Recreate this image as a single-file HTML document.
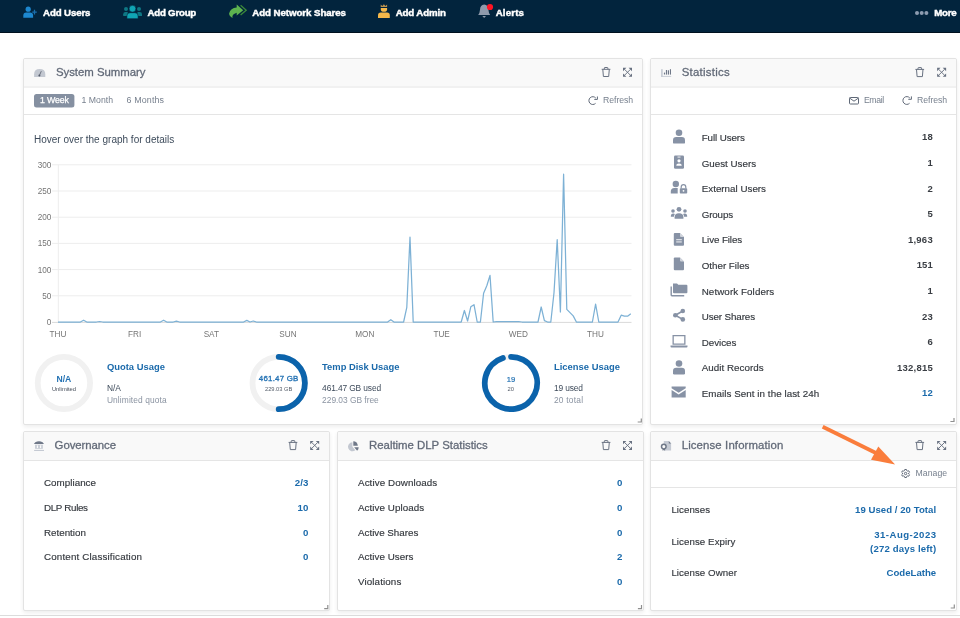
<!DOCTYPE html>
<html><head><meta charset="utf-8">
<style>
*{box-sizing:border-box;margin:0;padding:0}
html,body{width:960px;height:618px;overflow:hidden;background:#fff;font-family:"Liberation Sans",sans-serif;position:relative}
#top{position:absolute;left:0;top:0;width:960px;height:33px;background:#02243d;border-bottom:1px solid #00111f}
.panel{position:absolute;background:#fff;border:1px solid #e3e3e3;border-radius:2px;box-shadow:0 2px 4px rgba(0,0,0,0.07)}
.ph{position:absolute;left:0;top:0;right:0;height:29px;background:#f9f9f9;border-bottom:1px solid #e5e5e5;border-radius:2px 2px 0 0}
.tb{position:absolute;left:0;right:0;top:29px;height:27px;border-bottom:1px solid #e5e5e5}
svg text{font-family:"Liberation Sans",sans-serif}
#ov{position:absolute;left:0;top:0;will-change:transform}
</style></head><body>
<div id="top"></div>
<div class="panel" style="left:23px;top:58px;width:620px;height:367px"><div class="ph" style="border-bottom:2px solid #f1f1f1"></div><div class="tb"></div></div>
<div class="panel" style="left:650px;top:58px;width:307px;height:367px"><div class="ph" style="border-bottom:2px solid #f1f1f1"></div><div class="tb"></div></div>
<div class="panel" style="left:23px;top:431px;width:307px;height:180px"><div class="ph"></div></div>
<div class="panel" style="left:337px;top:431px;width:307px;height:180px"><div class="ph"></div></div>
<div class="panel" style="left:650px;top:431px;width:307px;height:180px"><div class="ph"></div><div class="tb"></div></div>
<div style="position:absolute;left:0;top:615px;width:960px;height:1px;background:#dcdcdc"></div>
<svg id="ov" width="960" height="618" viewBox="0 0 960 618">
<g fill="#1d88d0"><circle cx="28.2" cy="9.2" r="2.6"/><path d="M23.3,17.7 v-2.2 q0,-3 3,-3 h3.8 q3,0 3,3 v2.2z"/></g>
<path d="M34.5,9.8 v4.6 M32.2,12.1 h4.6" stroke="#1a6fae" stroke-width="1.3"/>
<g fill="#0e7784"><circle cx="126" cy="9.1" r="2"/><path d="M123.2,15.9 v-1.6 q0,-2.3 2.3,-2.3 h2.2 v3.9z"/><circle cx="139" cy="9.1" r="2"/><path d="M142,15.9 v-1.6 q0,-2.3 -2.3,-2.3 h-2.2 v3.9z"/></g>
<g fill="#10a5b4" stroke="#02243d" stroke-width="0.6"><circle cx="132.5" cy="8.7" r="3.4"/><path d="M126.9,18.7 v-2.8 q0,-3.2 3.2,-3.2 h4.8 q3.2,0 3.2,3.2 v2.8z"/></g>
<path d="M240.6,5.3 L246.2,10.2 L240.6,15" fill="none" stroke="#3a873a" stroke-width="1.3"/>
<path d="M243.2,10.2 L236.7,4.5 V7.5 Q230.4,8 229.1,13.6 Q229.3,16.6 232.5,18 Q231.6,14.2 236.7,12.7 V15.5 Z" fill="#5db34f"/>
<path d="M380.7,7 V4.6 L382.3,5.9 L383.9,4.2 L385.5,5.9 L387.1,4.6 V7 Z" fill="#b8904e"/>
<g fill="#f5b84a"><path d="M380.8,8 h6.3 v1.5 q0,2.3 -3.15,2.3 q-3.15,0 -3.15,-2.3z"/><path d="M378,18 v-2.6 q0,-2.8 2.8,-2.8 h6.2 q2.8,0 2.8,2.8 v2.6z"/></g>
<g fill="#8f9aab"><path d="M484.2,4.6 q-4,0.4 -4.2,5.2 q-0.2,3 -1.8,5.2 h12 q-1.6,-2.2 -1.8,-5.2 q-0.2,-4.8 -4.2,-5.2z"/><path d="M482.3,16 h3.7 l-1.85,1.9z"/></g>
<circle cx="490" cy="7" r="3.1" fill="#ff1424"/>
<g fill="#8d9cb0"><circle cx="917" cy="13" r="2"/><circle cx="921.7" cy="13" r="2"/><circle cx="926.4" cy="13" r="2"/></g>
<g fill="none" stroke="#687181" stroke-width="1"><path d="M604.3000000000001,69.3 v-1.3 q0,-0.5 0.5,-0.5 h2.6 q0.5,0 0.5,0.5 v1.3"/><path d="M601.7,69.3 h8.7"/><path d="M602.8000000000001,69.3 l0.6,7.2 h5.3 l0.6,-7.2"/></g>
<path d="M624.6,69.39999999999999 L630.4,75.2 M630.4,69.39999999999999 L624.6,75.2" stroke="#687181" stroke-width="0.95" fill="none"/><g fill="#687181"><path d="M623,67.8 h3.4 L623,71.2z"/><path d="M632,67.8 h-3.4 L632,71.2z"/><path d="M632,76.8 h-3.4 L632,73.39999999999999z"/><path d="M623,76.8 h3.4 L623,73.39999999999999z"/></g>
<g fill="none" stroke="#687181" stroke-width="1"><path d="M918.0,69.4 v-1.3 q0,-0.5 0.5,-0.5 h2.6 q0.5,0 0.5,0.5 v1.3"/><path d="M915.4,69.4 h8.7"/><path d="M916.5,69.4 l0.6,7.2 h5.3 l0.6,-7.2"/></g>
<path d="M938.7,69.39999999999999 L944.5,75.2 M944.5,69.39999999999999 L938.7,75.2" stroke="#687181" stroke-width="0.95" fill="none"/><g fill="#687181"><path d="M937.1,67.8 h3.4 L937.1,71.2z"/><path d="M946.1,67.8 h-3.4 L946.1,71.2z"/><path d="M946.1,76.8 h-3.4 L946.1,73.39999999999999z"/><path d="M937.1,76.8 h3.4 L937.1,73.39999999999999z"/></g>
<g fill="none" stroke="#687181" stroke-width="1"><path d="M291.20000000000005,442.4 v-1.3 q0,-0.5 0.5,-0.5 h2.6 q0.5,0 0.5,0.5 v1.3"/><path d="M288.6,442.4 h8.7"/><path d="M289.70000000000005,442.4 l0.6,7.2 h5.3 l0.6,-7.2"/></g>
<path d="M311.8,442.5 L317.59999999999997,448.29999999999995 M317.59999999999997,442.5 L311.8,448.29999999999995" stroke="#687181" stroke-width="0.95" fill="none"/><g fill="#687181"><path d="M310.2,440.9 h3.4 L310.2,444.29999999999995z"/><path d="M319.2,440.9 h-3.4 L319.2,444.29999999999995z"/><path d="M319.2,449.9 h-3.4 L319.2,446.5z"/><path d="M310.2,449.9 h3.4 L310.2,446.5z"/></g>
<g fill="none" stroke="#687181" stroke-width="1"><path d="M604.3000000000001,442.4 v-1.3 q0,-0.5 0.5,-0.5 h2.6 q0.5,0 0.5,0.5 v1.3"/><path d="M601.7,442.4 h8.7"/><path d="M602.8000000000001,442.4 l0.6,7.2 h5.3 l0.6,-7.2"/></g>
<path d="M624.6,442.5 L630.4,448.29999999999995 M630.4,442.5 L624.6,448.29999999999995" stroke="#687181" stroke-width="0.95" fill="none"/><g fill="#687181"><path d="M623,440.9 h3.4 L623,444.29999999999995z"/><path d="M632,440.9 h-3.4 L632,444.29999999999995z"/><path d="M632,449.9 h-3.4 L632,446.5z"/><path d="M623,449.9 h3.4 L623,446.5z"/></g>
<g fill="none" stroke="#687181" stroke-width="1"><path d="M918.0,442.4 v-1.3 q0,-0.5 0.5,-0.5 h2.6 q0.5,0 0.5,0.5 v1.3"/><path d="M915.4,442.4 h8.7"/><path d="M916.5,442.4 l0.6,7.2 h5.3 l0.6,-7.2"/></g>
<path d="M938.7,442.5 L944.5,448.29999999999995 M944.5,442.5 L938.7,448.29999999999995" stroke="#687181" stroke-width="0.95" fill="none"/><g fill="#687181"><path d="M937.1,440.9 h3.4 L937.1,444.29999999999995z"/><path d="M946.1,440.9 h-3.4 L946.1,444.29999999999995z"/><path d="M946.1,449.9 h-3.4 L946.1,446.5z"/><path d="M937.1,449.9 h3.4 L937.1,446.5z"/></g>
<path d="M34.1,77.1 V74.2 Q34.1,68.9 39.7,68.9 Q45.3,68.9 45.3,74.2 V77.1z" fill="#c3c8d1"/><path d="M39.5,75.2 L41.3,71.2" stroke="#555d6b" stroke-width="0.8"/><circle cx="39.4" cy="75.5" r="1" fill="#555d6b"/>
<g fill="#c5cad3"><rect x="661.1" y="69.2" width="1.6" height="7.6"/><rect x="661.1" y="75.9" width="10.1" height="0.9"/></g><g fill="#6f7888"><rect x="663.9" y="72.4" width="1.2" height="2.2" rx="0.5"/><rect x="665.9" y="70" width="1.2" height="4.6"/><rect x="667.9" y="70.3" width="1.1" height="4.3"/><rect x="669.9" y="69.2" width="1.1" height="5.4"/></g>
<path d="M33.9,444 L35.3,442.3 Q39,440.4 42.6,442.3 L44,444z" fill="#6f7888"/><rect x="35.1" y="444.7" width="7.7" height="4.1" fill="#c5cad3"/><rect x="36.8" y="445.3" width="1.3" height="2.8" fill="#fafafa"/><rect x="39.9" y="445.3" width="1.3" height="2.8" fill="#fafafa"/><rect x="34.1" y="449.9" width="9.9" height="1.1" fill="#c5cad3"/>
<path d="M352.4,446.8 V442.3 A4.5,4.5 0 1 0 355.3,450.3 Z" fill="#c3c8d1"/><path d="M353.3,445.8 V441.3 A4.5,4.5 0 0 1 357.8,445.8 Z" fill="#6f7888"/><path d="M354.2,447.3 H358.7 A4.5,4.5 0 0 1 357.1,450.7 Z" fill="#6f7888"/>
<path d="M663.8,441.1 h5 l2.3,2.4 v7.1 h-7.3z" fill="#c5cad3"/><path d="M668.8,441.1 v2.4 h2.3z" fill="#6f7888"/><path d="M662.6,448.4 h2.5 v2.4 l-1.25,-0.8 l-1.25,0.8z" fill="#6f7888"/><circle cx="663.8" cy="446.6" r="2.3" fill="#fafafa" stroke="#6f7888" stroke-width="1.5"/>
<rect x="34" y="94" width="40.4" height="13.5" rx="2.5" fill="#8590a1"/>
<g fill="none" stroke="#5f6877" stroke-width="1"><path d="M595.79,98.09 A3.9,3.9 0 1 0 595.56,103.36"/><path d="M597.40,96.50 V99.40 H594.30"/></g>
<g stroke="#ededed" stroke-width="1"><line x1="52" y1="295.8" x2="631.5" y2="295.8"/><line x1="52" y1="269.6" x2="631.5" y2="269.6"/><line x1="52" y1="243.4" x2="631.5" y2="243.4"/><line x1="52" y1="217.2" x2="631.5" y2="217.2"/><line x1="52" y1="191.0" x2="631.5" y2="191.0"/><line x1="52" y1="164.8" x2="631.5" y2="164.8"/><line x1="58.3" y1="164.8" x2="58.3" y2="322"/></g><line x1="52" y1="322.4" x2="631.5" y2="322.4" stroke="#d9d9d9" stroke-width="1"/>
<polyline fill="none" stroke="#7db1d5" stroke-width="1.25" stroke-linejoin="round" points="58.0,322.0 61.2,322.0 64.4,322.0 67.6,322.0 70.8,322.0 74.0,322.0 77.2,322.0 80.4,322.0 83.6,320.2 86.8,322.0 90.0,322.0 93.2,322.0 96.4,322.0 99.6,321.5 102.8,322.0 106.0,322.0 109.2,322.0 112.4,322.0 115.6,322.0 118.8,322.0 122.0,322.0 125.2,322.0 128.4,322.0 131.6,322.0 134.8,322.0 138.0,322.0 141.2,322.0 144.4,322.0 147.6,322.0 150.8,322.0 154.0,322.0 157.2,322.0 160.4,322.0 163.6,320.2 166.8,322.0 170.0,322.0 173.2,322.0 176.4,321.2 179.6,322.0 182.8,322.0 186.0,322.0 189.2,322.0 192.4,322.0 195.6,322.0 198.8,322.0 202.0,322.0 205.2,322.0 208.4,322.0 211.6,322.0 214.8,322.0 218.0,322.0 221.2,322.0 224.4,322.0 227.6,322.0 230.8,322.0 234.0,322.0 237.2,322.0 240.4,322.0 243.6,322.0 246.8,320.4 250.0,322.0 253.2,321.0 256.4,322.0 259.6,322.0 262.8,322.0 266.0,322.0 269.2,322.0 272.4,322.0 275.6,322.0 278.8,322.0 282.0,322.0 285.2,322.0 288.4,322.0 291.6,322.0 294.8,322.0 298.0,322.0 301.2,322.0 304.4,322.0 307.6,322.0 310.8,322.0 314.0,322.0 317.2,322.0 320.4,322.0 323.6,322.0 326.8,322.0 330.0,322.0 333.2,322.0 336.4,322.0 339.6,322.0 342.8,322.0 346.0,322.0 349.2,322.0 352.4,322.0 355.6,322.0 358.8,322.0 362.0,322.0 365.2,322.0 368.4,322.0 371.6,322.0 374.8,322.0 378.0,322.0 381.2,322.0 384.4,322.0 387.6,322.0 390.8,319.7 394.0,322.0 397.2,322.0 400.4,322.0 403.6,322.0 406.8,307.3 410.0,237.1 413.2,322.0 416.4,322.0 419.6,322.0 422.8,322.0 426.0,322.0 429.2,322.0 432.4,322.0 435.6,322.0 438.8,322.0 442.0,322.0 445.2,322.0 448.4,322.0 451.6,322.0 454.8,322.0 458.0,322.0 461.2,322.0 464.4,310.5 467.6,321.0 470.8,306.8 474.0,304.7 477.2,322.0 480.4,322.0 483.6,293.2 486.8,285.8 490.0,275.4 493.2,322.0 496.4,321.7 499.6,321.7 502.8,321.7 506.0,321.7 509.2,321.7 512.4,321.7 515.6,321.7 518.8,321.7 522.0,322.0 525.2,322.0 528.4,322.0 531.6,322.0 534.8,322.0 538.0,322.0 541.2,307.0 544.4,320.7 547.6,322.0 550.8,322.0 554.0,292.7 557.2,239.7 560.4,312.0 563.6,174.2 566.8,309.4 570.0,312.6 573.2,315.9 576.4,322.0 579.6,322.0 582.8,322.0 586.0,322.0 589.2,322.0 592.4,322.0 595.6,304.2 598.8,322.0 602.0,322.0 605.2,322.0 608.4,322.0 611.6,322.0 614.8,322.0 618.0,322.0 621.2,315.2 624.4,316.2 627.6,316.2 630.8,313.7"/>
<circle cx="63.9" cy="383" r="26.2" fill="none" stroke="#f1f1f1" stroke-width="5.8"/>
<circle cx="278.7" cy="383" r="26.2" fill="none" stroke="#f1f1f1" stroke-width="5.8"/>
<path d="M278.70,356.80 A26.2,26.2 0 0 1 278.70,409.20" fill="none" stroke="#0b63ab" stroke-width="5.8" stroke-linecap="round"/>
<circle cx="511" cy="383" r="26.2" fill="none" stroke="#f1f1f1" stroke-width="5.8"/>
<path d="M511.00,356.80 A26.2,26.2 0 1 1 502.90,358.08" fill="none" stroke="#0b63ab" stroke-width="5.8" stroke-linecap="round"/>
<path d="M641.3,418.4 V422 H637.6999999999999" fill="none" stroke="#8f8f8f" stroke-width="1.2"/>
<g fill="none" stroke="#5f6877" stroke-width="1"><rect x="849.5" y="97.5" width="9" height="6.5" rx="0.8"/><path d="M849.8,98.2 L854,101.2 L858.2,98.2"/></g>
<g fill="none" stroke="#5f6877" stroke-width="1"><path d="M909.79,97.99 A3.9,3.9 0 1 0 909.56,103.26"/><path d="M911.40,96.40 V99.30 H908.30"/></g>
<g fill="#8792a5"><circle cx="679" cy="132.70000000000002" r="3.3"/><path d="M673.0,142.4 v-2.2 q0,-3.2 3.2,-3.2 h5.6 q3.2,0 3.2,3.2 v2.2 q0,1.2 -1.2,1.2 h-9.6 q-1.2,0 -1.2,-1.2z"/></g>
<rect x="674" y="155.5" width="10" height="13.2" rx="1.3" fill="#8792a5"/><rect x="677.5" y="156.6" width="3" height="0.9" fill="#fff"/><circle cx="679" cy="160.8" r="1.6" fill="#fff"/><path d="M676.3,165.8 q0,-2.4 2.7,-2.4 q2.7,0 2.7,2.4z" fill="#fff"/>
<g fill="#8792a5"><circle cx="675.8" cy="184" r="3.2"/><path d="M670.8,193.6 v-2.2 q0,-3.5 3.5,-3.5 h3.4 v5.7z"/><rect x="679.8" y="188.2" width="7.4" height="5.4" rx="0.8"/><path d="M681.2,188.5 v-1.5 a2.3,2.3 0 0 1 4.6,0 v1.5" fill="none" stroke="#8792a5" stroke-width="1.2"/></g><circle cx="683.5" cy="190.8" r="0.9" fill="#fff"/>
<g fill="#8792a5"><circle cx="679" cy="209.3" r="2.4"/><path d="M674.6,218.7 v-1.5 q0,-4 4.4,-4 q4.4,0 4.4,4 v1.5z"/><circle cx="673" cy="211" r="1.8"/><path d="M670.8,216.8 q0,-3.3 2.5,-3.3 q1,0 1.6,0.6 q-0.8,1 -1,2.7z"/><circle cx="685" cy="211" r="1.8"/><path d="M687.2,216.8 q0,-3.3 -2.5,-3.3 q-1,0 -1.6,0.6 q0.8,1 1,2.7z"/></g>
<path d="M673.8,234 q0,-1 1,-1 h5.2 l4,4 v7.7 q0,1 -1,1 h-8.2 q-1,0 -1,-1z" fill="#8792a5"/><path d="M680,233 v3 q0,1 1,1 h3" fill="#fff" opacity="0.6"/><rect x="676.2" y="239.3" width="5.6" height="0.9" fill="#fff"/><rect x="676.2" y="241.5" width="5.6" height="0.9" fill="#fff"/>
<path d="M673.8,258.5 q0,-1 1,-1 h5.2 l4,4 v7.7 q0,1 -1,1 h-8.2 q-1,0 -1,-1z" fill="#8792a5"/><path d="M680,257.5 v3 q0,1 1,1 h3" fill="#fff" opacity="0.6"/>
<g fill="#8792a5"><path d="M673,283.4 h4 l1.3,1.3 h8.1 q1,0 1,1 v6.5 q0,1 -1,1 h-12.4 q-1,0 -1,-1z"/><path d="M670.5,286.5 v8.6 q0,1.4 1.4,1.4 h12.3 v-1.4 h-12.3 v-8.6z"/></g>
<g fill="#8792a5"><circle cx="682.8" cy="311" r="2.3"/><circle cx="675.3" cy="315.2" r="2.3"/><circle cx="682.8" cy="319.4" r="2.3"/><path d="M675.3,315.2 L682.8,311 M675.3,315.2 L682.8,319.4" stroke="#8792a5" stroke-width="1.6"/></g>
<g fill="#8792a5"><path d="M672.5,335 h13 v9.8 h-13z M673.8,336.3 v7.2 h10.4 v-7.2z" fill-rule="evenodd"/><path d="M670.5,345.6 h17 v1 q0,1 -1,1 h-15 q-1,0 -1,-1z"/></g>
<g fill="#8792a5"><circle cx="679" cy="363.5" r="3.3"/><path d="M673.0,373.2 v-2.2 q0,-3.2 3.2,-3.2 h5.6 q3.2,0 3.2,3.2 v2.2 q0,1.2 -1.2,1.2 h-9.6 q-1.2,0 -1.2,-1.2z"/></g>
<g fill="#8792a5"><path d="M671.6,386.5 h14.1 v1.8 l-7.05,4.5 l-7.05,-4.5z"/><path d="M671.6,390 l7.05,4.4 l7.05,-4.4 v7.4 h-14.1z"/></g>
<path d="M954,417.9 V421.5 H950.4" fill="none" stroke="#8f8f8f" stroke-width="1.2"/>
<path d="M327.8,605.0 V608.6 H324.2" fill="none" stroke="#8f8f8f" stroke-width="1.2"/>
<path d="M641.5,605.0 V608.6 H637.9" fill="none" stroke="#8f8f8f" stroke-width="1.2"/>
<g fill="none" stroke="#5f6877" stroke-width="1"><polygon points="904.75,469.49 906.45,469.49 906.71,470.61 907.55,471.09 908.65,470.76 909.50,472.23 908.66,473.02 908.66,473.98 909.50,474.77 908.65,476.24 907.55,475.91 906.71,476.39 906.45,477.51 904.75,477.51 904.49,476.39 903.65,475.91 902.55,476.24 901.70,474.77 902.54,473.98 902.54,473.02 901.70,472.23 902.55,470.76 903.65,471.09 904.49,470.61" stroke-linejoin="round"/><circle cx="905.6" cy="473.5" r="1.2"/></g>
<path d="M954.3,604.4 V608 H950.6999999999999" fill="none" stroke="#8f8f8f" stroke-width="1.2"/>
<path d="M822.7,426.7 L880,455" stroke="#fa7d3c" stroke-width="3.9"/><path d="M895.1,464.4 L871,459.7 L878.3,446.6z" fill="#fa7d3c"/>
<text x="43.1" y="15.6" font-size="9.7" fill="#ffffff" font-weight="bold" stroke="#ffffff" stroke-width="0.45" textLength="47.4" lengthAdjust="spacing">Add Users</text>
<text x="147.5" y="15.6" font-size="9.7" fill="#ffffff" font-weight="bold" stroke="#ffffff" stroke-width="0.45" textLength="48.75" lengthAdjust="spacing">Add Group</text>
<text x="252.3" y="15.6" font-size="9.7" fill="#ffffff" font-weight="bold" stroke="#ffffff" stroke-width="0.45" textLength="93.7" lengthAdjust="spacing">Add Network Shares</text>
<text x="395.7" y="15.6" font-size="9.7" fill="#ffffff" font-weight="bold" stroke="#ffffff" stroke-width="0.45" textLength="50.3" lengthAdjust="spacing">Add Admin</text>
<text x="495.7" y="15.6" font-size="9.7" fill="#ffffff" font-weight="bold" stroke="#ffffff" stroke-width="0.45" textLength="28.3" lengthAdjust="spacing">Alerts</text>
<text x="934.2" y="15.6" font-size="9.7" fill="#ffffff" font-weight="bold" stroke="#ffffff" stroke-width="0.45" textLength="22.5" lengthAdjust="spacing">More</text>
<text x="55.9" y="76" font-size="11.4" fill="#626a78" stroke="#626a78" stroke-width="0.3" textLength="89.6" lengthAdjust="spacing">System Summary</text>
<text x="681.7" y="75.8" font-size="11.4" fill="#626a78" stroke="#626a78" stroke-width="0.3" textLength="48" lengthAdjust="spacing">Statistics</text>
<text x="54.6" y="448.9" font-size="11.4" fill="#626a78" stroke="#626a78" stroke-width="0.3" textLength="61.4" lengthAdjust="spacing">Governance</text>
<text x="369" y="448.9" font-size="11.4" fill="#626a78" stroke="#626a78" stroke-width="0.3" textLength="118.7" lengthAdjust="spacing">Realtime DLP Statistics</text>
<text x="681.7" y="449" font-size="11.4" fill="#626a78" stroke="#626a78" stroke-width="0.3" textLength="101.6" lengthAdjust="spacing">License Information</text>
<text x="54.4" y="103.2" font-size="8.8" fill="#ffffff" text-anchor="middle" stroke="#ffffff" stroke-width="0.25" textLength="28.8" lengthAdjust="spacing">1 Week</text>
<text x="81.6" y="103" font-size="8.7" fill="#77808e" textLength="31.4" lengthAdjust="spacing">1 Month</text>
<text x="126.6" y="103" font-size="8.9" fill="#77808e" textLength="37.4" lengthAdjust="spacing">6 Months</text>
<text x="603" y="102.8" font-size="8.7" fill="#77808e" textLength="30.2" lengthAdjust="spacing">Refresh</text>
<text x="34" y="142.9" font-size="10" fill="#3d4b5b" textLength="140.3" lengthAdjust="spacing">Hover over the graph for details</text>
<text x="51.3" y="324.9" font-size="8.2" fill="#757575" text-anchor="end">0</text>
<text x="51.3" y="298.7" font-size="8.2" fill="#757575" text-anchor="end">50</text>
<text x="51.3" y="272.5" font-size="8.2" fill="#757575" text-anchor="end">100</text>
<text x="51.3" y="246.3" font-size="8.2" fill="#757575" text-anchor="end">150</text>
<text x="51.3" y="220.1" font-size="8.2" fill="#757575" text-anchor="end">200</text>
<text x="51.3" y="193.9" font-size="8.2" fill="#757575" text-anchor="end">250</text>
<text x="51.3" y="167.7" font-size="8.2" fill="#757575" text-anchor="end">300</text>
<text x="58" y="336.8" font-size="8.2" fill="#757575" text-anchor="middle">THU</text>
<text x="134.6" y="336.8" font-size="8.2" fill="#757575" text-anchor="middle">FRI</text>
<text x="211.3" y="336.8" font-size="8.2" fill="#757575" text-anchor="middle">SAT</text>
<text x="288" y="336.8" font-size="8.2" fill="#757575" text-anchor="middle">SUN</text>
<text x="364.8" y="336.8" font-size="8.2" fill="#757575" text-anchor="middle">MON</text>
<text x="441.6" y="336.8" font-size="8.2" fill="#757575" text-anchor="middle">TUE</text>
<text x="518.4" y="336.8" font-size="8.2" fill="#757575" text-anchor="middle">WED</text>
<text x="595.4" y="336.8" font-size="8.2" fill="#757575" text-anchor="middle">THU</text>
<text x="63.9" y="382" font-size="8.6" fill="#2271b3" font-weight="bold" text-anchor="middle">N/A</text>
<text x="64" y="391" font-size="5.8" fill="#444c58" text-anchor="middle">Unlimited</text>
<text x="278.6" y="381.4" font-size="7.9" fill="#2271b3" text-anchor="middle" stroke="#2271b3" stroke-width="0.3" textLength="39.5" lengthAdjust="spacing">461.47 GB</text>
<text x="278.6" y="390.9" font-size="5.7" fill="#555d69" text-anchor="middle">229.03 GB</text>
<text x="511" y="381.7" font-size="7.6" fill="#2271b3" text-anchor="middle" stroke="#2271b3" stroke-width="0.2">19</text>
<text x="510.8" y="390.9" font-size="5.8" fill="#555d69" text-anchor="middle">20</text>
<text x="106.9" y="369.6" font-size="9.4" fill="#1b6aab" font-weight="bold" textLength="58.1" lengthAdjust="spacing">Quota Usage</text>
<text x="106.9" y="390.8" font-size="8.4" fill="#3d4a5a">N/A</text>
<text x="106.9" y="402.5" font-size="8.4" fill="#8a93a1" textLength="59.8" lengthAdjust="spacing">Unlimited quota</text>
<text x="322.1" y="369.6" font-size="9.4" fill="#1b6aab" font-weight="bold" textLength="77.3" lengthAdjust="spacing">Temp Disk Usage</text>
<text x="322.1" y="390.8" font-size="8.4" fill="#3d4a5a" textLength="59" lengthAdjust="spacing">461.47 GB used</text>
<text x="322.1" y="402.5" font-size="8.4" fill="#8a93a1" textLength="56.65" lengthAdjust="spacing">229.03 GB free</text>
<text x="553.9" y="369.6" font-size="9.4" fill="#1b6aab" font-weight="bold" textLength="66" lengthAdjust="spacing">License Usage</text>
<text x="553.9" y="390.8" font-size="8.4" fill="#3d4a5a" textLength="29.1" lengthAdjust="spacing">19 used</text>
<text x="553.9" y="402.5" font-size="8.4" fill="#8a93a1" textLength="29.1" lengthAdjust="spacing">20 total</text>
<text x="863.9" y="103.3" font-size="8.7" fill="#77808e" textLength="20.3" lengthAdjust="spacing">Email</text>
<text x="917" y="103.3" font-size="8.7" fill="#77808e" textLength="30.2" lengthAdjust="spacing">Refresh</text>
<text x="701.7" y="141.0" font-size="9.8" fill="#33373d" stroke="#33373d" stroke-width="0.15" textLength="43.2" lengthAdjust="spacing">Full Users</text>
<text x="932.7" y="140.3" font-size="9.5" fill="#3a3e44" font-weight="bold" text-anchor="end">18</text>
<text x="701.7" y="166.6" font-size="9.8" fill="#33373d" stroke="#33373d" stroke-width="0.15" textLength="54.4" lengthAdjust="spacing">Guest Users</text>
<text x="932.7" y="165.9" font-size="9.5" fill="#3a3e44" font-weight="bold" text-anchor="end">1</text>
<text x="701.7" y="192.2" font-size="9.8" fill="#33373d" stroke="#33373d" stroke-width="0.15" textLength="64.3" lengthAdjust="spacing">External Users</text>
<text x="932.7" y="191.5" font-size="9.5" fill="#3a3e44" font-weight="bold" text-anchor="end">2</text>
<text x="701.7" y="217.8" font-size="9.8" fill="#33373d" stroke="#33373d" stroke-width="0.15" textLength="31.4" lengthAdjust="spacing">Groups</text>
<text x="932.7" y="217.1" font-size="9.5" fill="#3a3e44" font-weight="bold" text-anchor="end">5</text>
<text x="701.7" y="243.4" font-size="9.8" fill="#33373d" stroke="#33373d" stroke-width="0.15" textLength="40.5" lengthAdjust="spacing">Live Files</text>
<text x="932.7" y="242.7" font-size="9.5" fill="#3a3e44" font-weight="bold" text-anchor="end" textLength="24.8" lengthAdjust="spacing">1,963</text>
<text x="701.7" y="269.0" font-size="9.8" fill="#33373d" stroke="#33373d" stroke-width="0.15" textLength="47.8" lengthAdjust="spacing">Other Files</text>
<text x="932.7" y="268.3" font-size="9.5" fill="#3a3e44" font-weight="bold" text-anchor="end">151</text>
<text x="701.7" y="294.6" font-size="9.8" fill="#33373d" stroke="#33373d" stroke-width="0.15" textLength="72.5" lengthAdjust="spacing">Network Folders</text>
<text x="932.7" y="293.9" font-size="9.5" fill="#3a3e44" font-weight="bold" text-anchor="end">1</text>
<text x="701.7" y="320.2" font-size="9.8" fill="#33373d" stroke="#33373d" stroke-width="0.15" textLength="53.4" lengthAdjust="spacing">User Shares</text>
<text x="932.7" y="319.5" font-size="9.5" fill="#3a3e44" font-weight="bold" text-anchor="end">23</text>
<text x="701.7" y="345.8" font-size="9.8" fill="#33373d" stroke="#33373d" stroke-width="0.15" textLength="34.7" lengthAdjust="spacing">Devices</text>
<text x="932.7" y="345.1" font-size="9.5" fill="#3a3e44" font-weight="bold" text-anchor="end">6</text>
<text x="701.7" y="371.4" font-size="9.8" fill="#33373d" stroke="#33373d" stroke-width="0.15" textLength="62" lengthAdjust="spacing">Audit Records</text>
<text x="932.7" y="370.7" font-size="9.5" fill="#3a3e44" font-weight="bold" text-anchor="end" textLength="35.6" lengthAdjust="spacing">132,815</text>
<text x="701.7" y="397.0" font-size="9.8" fill="#33373d" stroke="#33373d" stroke-width="0.15" textLength="117.4" lengthAdjust="spacing">Emails Sent in the last 24h</text>
<text x="932.7" y="396.3" font-size="9.5" fill="#1b6aab" font-weight="bold" text-anchor="end">12</text>
<text x="44" y="486.0" font-size="9.8" fill="#33373d" stroke="#33373d" stroke-width="0.15" textLength="52" lengthAdjust="spacing">Compliance</text>
<text x="308.3" y="486.0" font-size="9.7" fill="#1b6aab" font-weight="bold" text-anchor="end">2/3</text>
<text x="44" y="511.0" font-size="9.8" fill="#33373d" stroke="#33373d" stroke-width="0.15" textLength="44" lengthAdjust="spacing">DLP Rules</text>
<text x="308.3" y="511.0" font-size="9.7" fill="#1b6aab" font-weight="bold" text-anchor="end">10</text>
<text x="44" y="536.0" font-size="9.8" fill="#33373d" stroke="#33373d" stroke-width="0.15" textLength="41.9" lengthAdjust="spacing">Retention</text>
<text x="308.3" y="536.0" font-size="9.7" fill="#1b6aab" font-weight="bold" text-anchor="end">0</text>
<text x="44" y="560.0" font-size="9.8" fill="#33373d" stroke="#33373d" stroke-width="0.15" textLength="98" lengthAdjust="spacing">Content Classification</text>
<text x="308.3" y="560.0" font-size="9.7" fill="#1b6aab" font-weight="bold" text-anchor="end">0</text>
<text x="358" y="486.0" font-size="9.8" fill="#33373d" stroke="#33373d" stroke-width="0.15" textLength="79.2" lengthAdjust="spacing">Active Downloads</text>
<text x="622.3" y="486.0" font-size="9.7" fill="#1b6aab" font-weight="bold" text-anchor="end">0</text>
<text x="358" y="511.0" font-size="9.8" fill="#33373d" stroke="#33373d" stroke-width="0.15" textLength="66.2" lengthAdjust="spacing">Active Uploads</text>
<text x="622.3" y="511.0" font-size="9.7" fill="#1b6aab" font-weight="bold" text-anchor="end">0</text>
<text x="358" y="536.0" font-size="9.8" fill="#33373d" stroke="#33373d" stroke-width="0.15" textLength="60.3" lengthAdjust="spacing">Active Shares</text>
<text x="622.3" y="536.0" font-size="9.7" fill="#1b6aab" font-weight="bold" text-anchor="end">0</text>
<text x="358" y="560.0" font-size="9.8" fill="#33373d" stroke="#33373d" stroke-width="0.15" textLength="55.5" lengthAdjust="spacing">Active Users</text>
<text x="622.3" y="560.0" font-size="9.7" fill="#1b6aab" font-weight="bold" text-anchor="end">2</text>
<text x="358" y="585.0" font-size="9.8" fill="#33373d" stroke="#33373d" stroke-width="0.15" textLength="43.3" lengthAdjust="spacing">Violations</text>
<text x="622.3" y="585.0" font-size="9.7" fill="#1b6aab" font-weight="bold" text-anchor="end">0</text>
<text x="915.5" y="476" font-size="8.7" fill="#77808e" textLength="31.7" lengthAdjust="spacing">Manage</text>
<text x="671.4" y="512.8" font-size="9.7" fill="#33373d" stroke="#33373d" stroke-width="0.15" textLength="38.6" lengthAdjust="spacing">Licenses</text>
<text x="671.4" y="545" font-size="9.7" fill="#33373d" stroke="#33373d" stroke-width="0.15" textLength="64" lengthAdjust="spacing">License Expiry</text>
<text x="671.4" y="575.8" font-size="9.7" fill="#33373d" stroke="#33373d" stroke-width="0.15" textLength="65.5" lengthAdjust="spacing">License Owner</text>
<text x="936.1" y="512.8" font-size="9.6" fill="#1b6aab" font-weight="bold" text-anchor="end" textLength="81.1" lengthAdjust="spacing">19 Used / 20 Total</text>
<text x="936.1" y="538" font-size="9.6" fill="#1b6aab" font-weight="bold" text-anchor="end" textLength="61.9" lengthAdjust="spacing">31-Aug-2023</text>
<text x="936.1" y="551.5" font-size="9.6" fill="#1b6aab" font-weight="bold" text-anchor="end" textLength="66" lengthAdjust="spacing">(272 days left)</text>
<text x="936.1" y="575.8" font-size="9.6" fill="#1b6aab" font-weight="bold" text-anchor="end" textLength="49.5" lengthAdjust="spacing">CodeLathe</text>
</svg>
</body></html>
